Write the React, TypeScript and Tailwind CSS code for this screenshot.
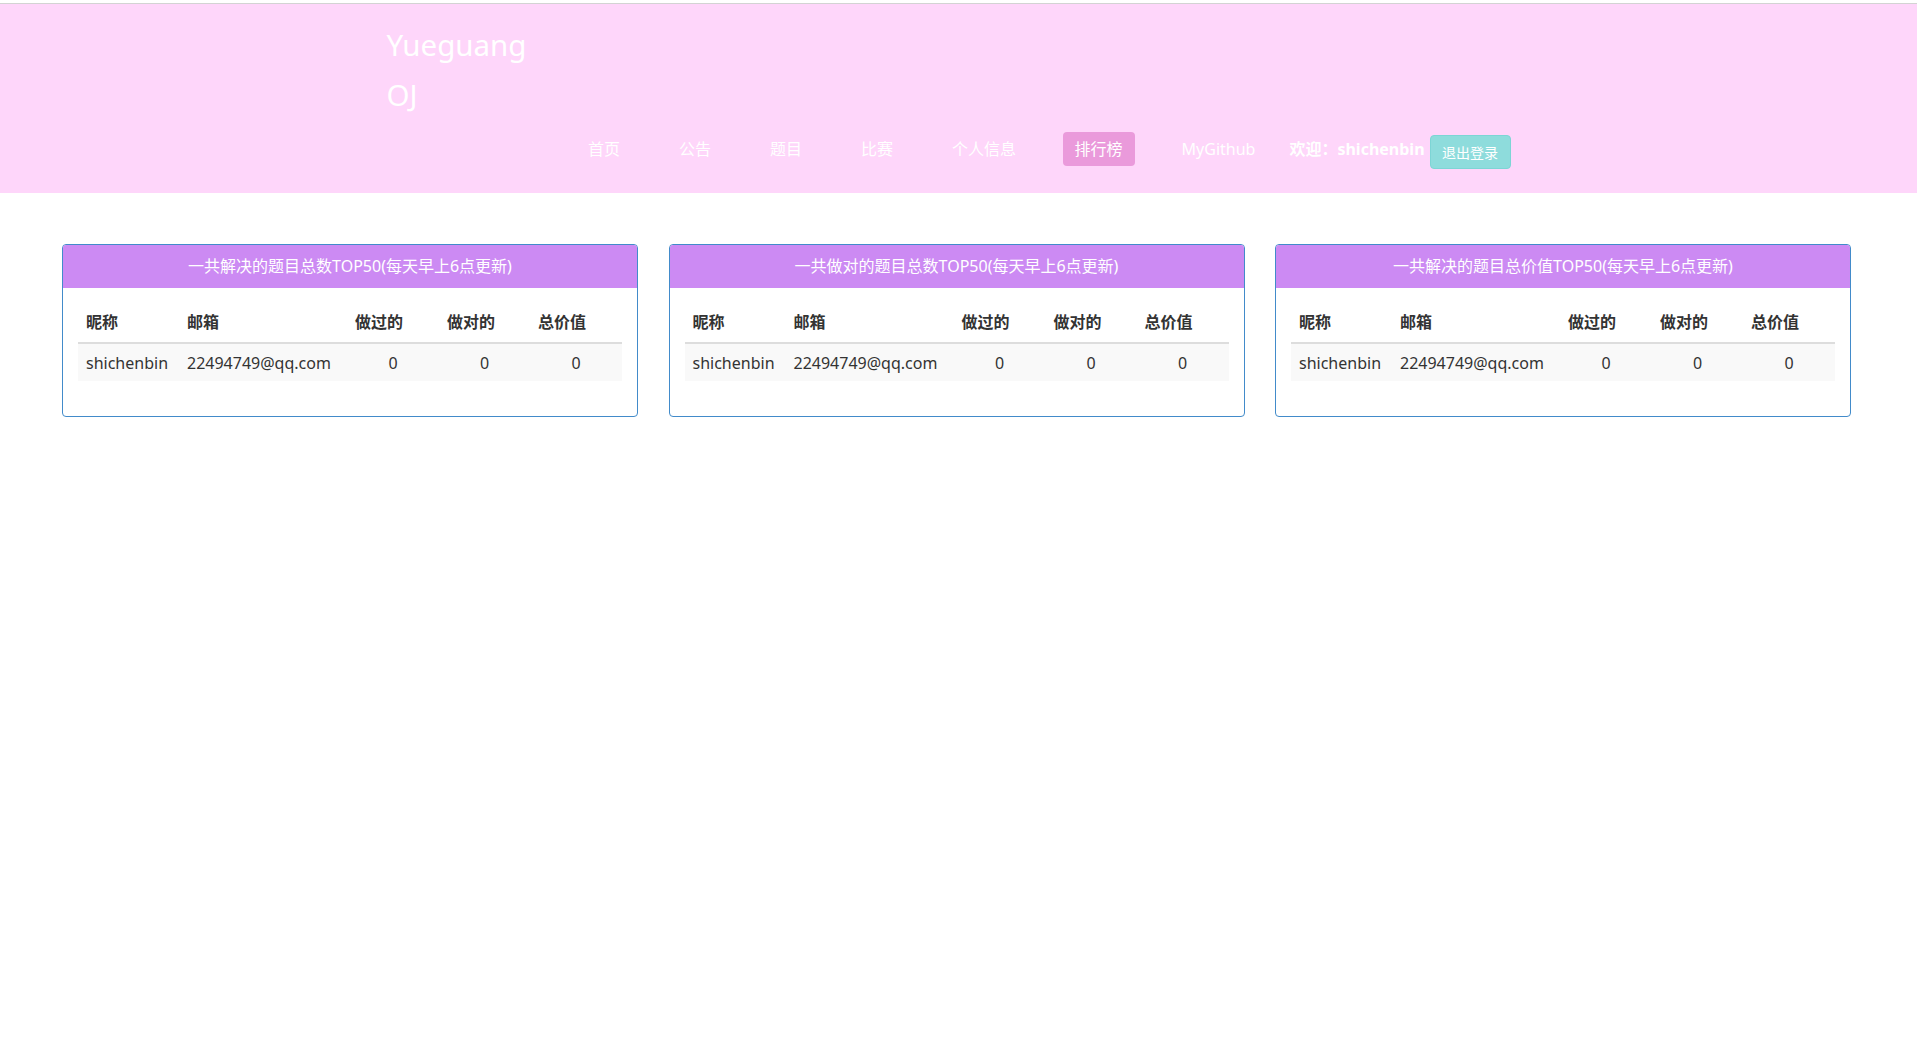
import React from 'react'

interface RankRow {
  name: string;
  email: string;
  tried: number;
  solved: number;
  value: number;
}

const rows: RankRow[] = [
  { name: 'shichenbin', email: '22494749@qq.com', tried: 0, solved: 0, value: 0 },
];

const boards = [
  '一共解决的题目总数TOP50(每天早上6点更新)',
  '一共做对的题目总数TOP50(每天早上6点更新)',
  '一共解决的题目总价值TOP50(每天早上6点更新)',
];

const navLinks = ['首页', '公告', '题目', '比赛', '个人信息'];

const RankPanel: React.FC<{ title: string }> = ({ title }) => {
  return (
    <div className="border border-[#428bca] rounded-[4px] bg-white overflow-hidden">
      <div className="bg-[#cc8af3] text-white text-center px-[15px] pb-[2px] h-[43px] flex items-center justify-center">
        {title}
      </div>
      <div className="p-[15px]">
        <table className="w-full table-fixed border-collapse mb-[20px] text-[#333]">
          <colgroup>
            <col className="w-[101px]" />
            <col className="w-[168px]" />
            <col className="w-[92px]" />
            <col className="w-[91px]" />
            <col className="w-[92px]" />
          </colgroup>
          <thead>
            <tr className="h-[40px]">
              <th className="text-left font-bold px-[8px] pt-0 pb-[2px] align-middle border-b-2 border-[#ddd]">昵称</th>
              <th className="text-left font-bold px-[8px] pt-0 pb-[2px] align-middle border-b-2 border-[#ddd]">邮箱</th>
              <th className="text-left font-bold px-[8px] pt-0 pb-[2px] align-middle border-b-2 border-[#ddd]">做过的</th>
              <th className="text-left font-bold px-[8px] pt-0 pb-[2px] align-middle border-b-2 border-[#ddd]">做对的</th>
              <th className="text-left font-bold px-[8px] pt-0 pb-[2px] align-middle border-b-2 border-[#ddd]">总价值</th>
            </tr>
          </thead>
          <tbody>
            {rows.map((r) => (
              <tr key={r.email} className="bg-[#f9f9f9] h-[38px]">
                <td className="px-[8px] py-0 align-middle whitespace-nowrap">{r.name}</td>
                <td className="px-[8px] py-0 align-middle whitespace-nowrap">{r.email}</td>
                <td className="px-[8px] py-0 align-middle text-center">{r.tried}</td>
                <td className="px-[8px] py-0 align-middle text-center">{r.solved}</td>
                <td className="px-[8px] py-0 align-middle text-center">{r.value}</td>
              </tr>
            ))}
          </tbody>
        </table>
      </div>
    </div>
  );
};

export default function App() {
  return (
    <div className="min-h-screen bg-white text-[16px] font-['Noto_Sans','Noto_Sans_CJK_SC',sans-serif]">
      <div className="h-[4px] bg-white border-b border-[#d3d3d3]" />
      <header className="bg-[#fed6fa] h-[189px]">
        <div className="mx-auto w-[1170px] px-[15px] flex">
          <div className="w-[172px] -ml-[2px] pt-[16px] text-white text-[29.5px] leading-[50px]">
            Yueguang
            <br />
            OJ
          </div>
          <nav className="flex items-center pt-[118px] h-[172px] text-white">
            {navLinks.map((l) => (
              <a key={l} href="#" className="px-[29.5px] leading-[22px]">
                {l}
              </a>
            ))}
            <a href="#" className="ml-[17px] bg-[#ea9adb] rounded-[4px] px-[12px] h-[34px] flex items-center">
              排行榜
            </a>
            <a href="#" className="ml-[47px]">MyGithub</a>
            <span className="ml-[34px] font-bold">欢迎：shichenbin</span>
            <button className="ml-[5px] mt-[6px] h-[34px] px-[11.5px] text-[14px] text-white bg-[#8edcdc] border border-[#7dd5d5] rounded-[4px]">
              退出登录
            </button>
          </nav>
        </div>
      </header>
      <main className="pt-[51px] pl-[62px] pr-[66px] grid grid-cols-3 gap-x-[30.5px]">
        {boards.map((b) => (
          <RankPanel key={b} title={b} />
        ))}
      </main>
    </div>
  );
}
